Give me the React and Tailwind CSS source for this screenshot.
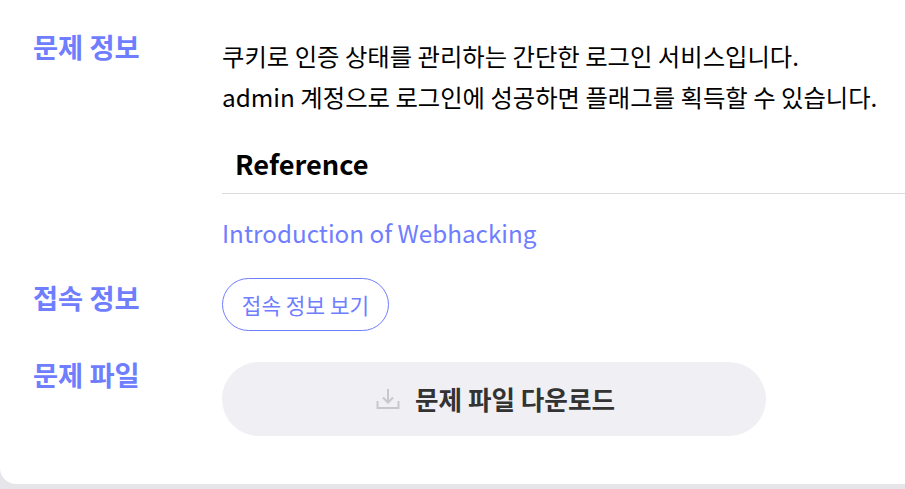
export default function App() {
  return (
    <div className="h-[489px] w-[905px] overflow-hidden bg-[#e5e5ea] font-['Noto_Sans_CJK_KR','Noto_Sans',sans-serif]">
      <div className="h-[484px] w-[930px] rounded-bl-[16px] bg-white pl-[33px]">
        <div className="flex pt-[28px]">
          <div className="w-[189px] shrink-0 text-[27.3px] leading-[36px] font-bold text-[#6f7dff]">문제 정보</div>
          <div className="min-w-0 flex-1">
            <p className="mt-[7px] text-[24.35px] leading-[41px] text-black">쿠키로 인증 상태를 관리하는 간단한 로그인 서비스입니다.</p>
            <p className="text-[24.35px] leading-[41px] text-black">admin 계정으로 로그인에 성공하면 플래그를 획득할 수 있습니다.</p>
            <h3 className="mt-[26px] border-b border-[#dcdcdf] pb-[9px] pl-[13px] text-[27.2px] leading-[41px] font-bold text-black">Reference</h3>
            <a className="mt-[18px] block text-[24.25px] leading-[42px] text-[#6f7dff]">Introduction of Webhacking</a>
          </div>
        </div>
        <div className="mt-[24px] flex">
          <div className="w-[189px] shrink-0 pt-[1px] text-[27.3px] leading-[36px] font-bold text-[#6f7dff]">접속 정보</div>
          <button className="h-[53px] w-[167px] rounded-full border border-[#6f7dff] text-center text-[21.33px] text-[#6f7dff]">접속 정보 보기</button>
        </div>
        <div className="mt-[31px] flex">
          <div className="mt-[-6px] w-[189px] shrink-0 text-[27.3px] leading-[36px] font-bold text-[#6f7dff]">문제 파일</div>
          <button className="flex h-[74px] w-[544px] items-center justify-center gap-[15px] rounded-full bg-[#f0f0f4] pl-[3px] text-[25.6px] font-bold text-[#333]">
            <svg width="24" height="24" viewBox="0 0 24 24" fill="none" stroke="#c8c8cc" strokeWidth="2">
              <path d="M12 2v13M7 10.500l5 5 5-5M1.500 14v7h21v-7" />
            </svg>
            문제 파일 다운로드
          </button>
        </div>
      </div>
    </div>
  );
}
